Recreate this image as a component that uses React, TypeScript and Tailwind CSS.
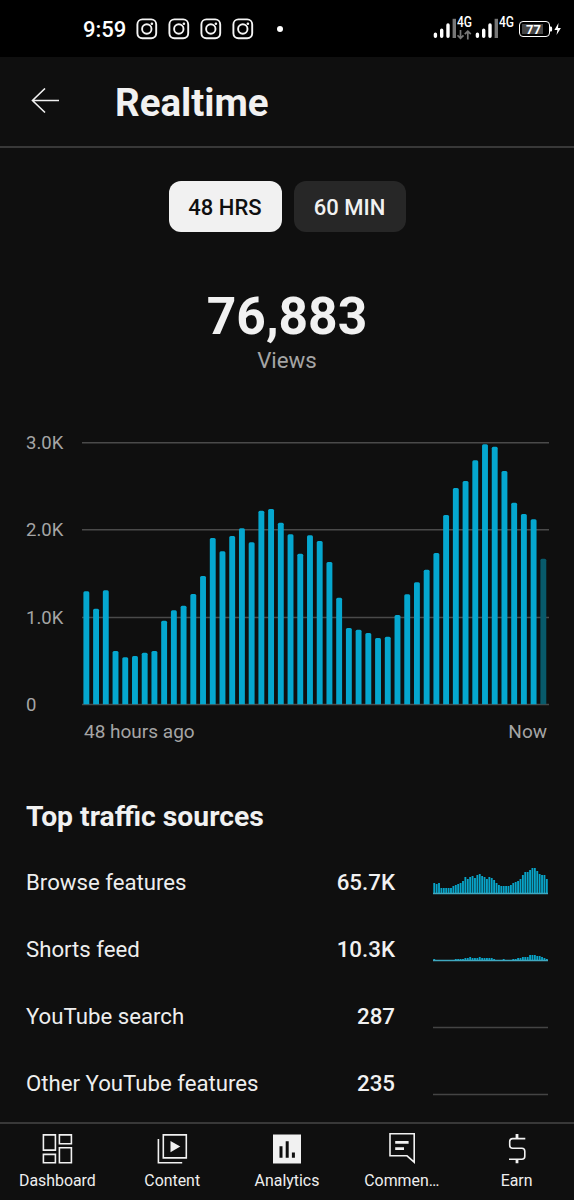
import React from "react";

const VIEWS_TOPS = [
  591.3, 608.7, 590.3, 651, 657.3, 656, 652.7, 651, 620.7, 610.3, 605.7, 594, 576, 538, 551.3, 536,
  528.3, 542.3, 510.7, 509, 522.7, 534.3, 553.7, 535.3, 541, 562, 597.7, 628, 629.7, 633, 638, 636.7,
  615, 594.3, 582.3, 569.7, 553, 515, 488, 481, 460.3, 444.3, 446.7, 471, 502.7, 514, 519.3, 558.7,
];
const BAR_HEIGHTS = VIEWS_TOPS.map((t) => 704.5 - t);

const BROWSE = BAR_HEIGHTS.map((h) => Math.round(h * 0.1) + (h < 80 ? 1 : 0));
const SHORTS = [
  2, 1, 1, 1, 1, 1, 1, 1, 1, 2, 2, 2, 2, 3, 3, 4, 3, 3, 3, 4, 3, 3, 3, 3, 3, 2, 1, 1, 1, 2, 1, 1,
  1, 2, 2, 3, 3, 4, 4, 4, 6, 6, 6, 5, 5, 4, 3, 2,
];

function InstagramIcon() {
  return (
    <svg width="22" height="22" viewBox="0 0 22 22" fill="none" stroke="#f4f4f4">
      <rect x="1.4" y="1.4" width="18.8" height="18.8" rx="5" strokeWidth="1.9" />
      <circle cx="10.8" cy="11" r="4.7" strokeWidth="1.9" />
      <circle cx="15.9" cy="5.7" r="1.3" fill="#f4f4f4" stroke="none" />
    </svg>
  );
}

function SignalIcon() {
  return (
    <svg width="24" height="22" viewBox="0 0 24 22" strokeWidth="3.4" strokeLinecap="round">
      <path d="M2.4 16.2V18.2M8.7 12.2V18.2M15 6.9V18.2" stroke="#fff" />
      <path d="M21.3 0.8V20" stroke="#777" strokeLinecap="butt" />
    </svg>
  );
}

function NetworkLabel() {
  return (
    <span className="block h-[12px] origin-left scale-x-[0.86] text-[14px] leading-[8px] font-medium">4G</span>
  );
}

function StatusBar() {
  return (
    <header className="flex h-[57px] shrink-0 items-center bg-black pl-[83px] text-white">
      <span className="w-[53px] pt-[3px] text-[22px] leading-6 font-medium">9:59</span>
      <div className="flex gap-[10px]">
        <InstagramIcon />
        <InstagramIcon />
        <InstagramIcon />
        <InstagramIcon />
      </div>
      <span className="ml-[23px] size-[6px] rounded-full bg-white" />
      <div className="ml-[150px] flex h-[22px] items-start">
        <SignalIcon />
        <div className="flex w-[18px] shrink-0 flex-col">
          <NetworkLabel />
          <svg width="15" height="10" viewBox="0 0 15 10" fill="none" stroke="#777" strokeWidth="1.7">
            <path d="M3.5 0v8M0.5 5.3l3 3 3-3M10.8 9.5V1.5M7.8 4.2l3-3 3 3" />
          </svg>
        </div>
        <SignalIcon />
        <div className="w-[20px] shrink-0">
          <NetworkLabel />
        </div>
        <div className="mt-[3px] flex h-[16px] w-[31px] shrink-0 rounded-[4px] border-[1.5px] border-white p-[2px]">
          <span className="h-full w-[21px] bg-[#444] pl-[4px] text-[13px] leading-[11px] font-bold">77</span>
        </div>
        <svg width="12" height="16" viewBox="0 0 12 16" className="mt-[3px]" fill="#fff">
          <path d="M0 5.5h1.2q1 0 1 2.5t-1 2.5H0zM8.5 2L4.4 9h3L6.5 14l4.4-7H8z" />
        </svg>
      </div>
    </header>
  );
}

function ViewsChart() {
  return (
    <section className="mt-[59px] flex px-[26px]">
      <div className="flex w-[56px] shrink-0 flex-col pt-[1px] text-[18.5px] leading-[20px] text-[#a5a5a5]">
        <span className="h-[87px]">3.0K</span>
        <span className="h-[88px]">2.0K</span>
        <span className="h-[87px]">1.0K</span>
        <span>0</span>
      </div>
      <div className="shrink-0">
        <svg width="467" height="274" viewBox="81 432 467 274" className="block">
          <path d="M81 442.7H548M81 529.7H548M81 617.5H548M81 704.5H548" stroke="#4a4a4a" strokeWidth="1.4" />
          {BAR_HEIGHTS.map((h, i) => {
            const x = 82.4 + i * 9.723;
            const y = 704.5 - h;
            return (
              <path
                key={i}
                d={`M${x} 704.3V${y + 1.5}q0 -1.5 1.5 -1.5h2.9q1.5 0 1.5 1.5V704.3z`}
                fill={i === 47 ? "#085a6b" : "#05a7cf"}
              />
            );
          })}
        </svg>
        <div className="mt-[16px] flex justify-between pr-[2px] pl-[2px] text-[19px] leading-[20px] text-[#a5a5a5]">
          <span>48 hours ago</span>
          <span>Now</span>
        </div>
      </div>
    </section>
  );
}

function Sparkline({ values }: { values: number[] }) {
  const step = 115 / 48;
  return (
    <svg width="115" height="28" viewBox="0 0 115 28" className="block">
      {values.map((v, i) => (
        <rect key={i} x={i * step + 0.3} y={27 - v} width="1.85" height={v} fill="#08a4c8" />
      ))}
      <path d="M0 26.4H115" stroke={values.length ? "#40a8bf" : "#444"} strokeWidth="1.5" />
    </svg>
  );
}

function SourceRow({ label, value, values }: { label: string; value: string; values: number[] }) {
  return (
    <div className="flex h-[67px] items-center">
      <span className="flex-1 pt-[1px] text-[22.2px] text-[#eee]">{label}</span>
      <span className="mr-[38px] pt-[1px] text-[22.3px] font-medium text-[#f1f1f1]">{value}</span>
      <div className="pb-[3px]">
        <Sparkline values={values} />
      </div>
    </div>
  );
}

function NavItem({ label, children }: { label: string; children: React.ReactNode }) {
  return (
    <div className="flex flex-1 flex-col items-center pt-[8px]">
      <svg width="34" height="34" viewBox="0 0 34 34" fill="none" stroke="#f1f1f1" strokeWidth="1.6">
        {children}
      </svg>
      <span className="mt-[5px] text-[15.9px] leading-[20px] text-[#eee]">{label}</span>
    </div>
  );
}

export default function App() {
  return (
    <div className="flex h-[1200px] w-[574px] flex-col overflow-hidden bg-[#0f0f0f] font-['Roboto',sans-serif] text-[#f1f1f1]">
      <StatusBar />
      <div className="flex h-[91px] shrink-0 items-center border-b-2 border-[#383838] pl-[31px]">
        <svg width="29" height="28" viewBox="0 0 29 28" fill="none" stroke="#f1f1f1" strokeWidth="1.6">
          <path d="M28 12.5H1.5M14 0.5L1.5 12.5 14 24.5" />
        </svg>
        <h1 className="ml-[55px] pt-[2px] text-[38.5px] leading-[44px] font-bold">Realtime</h1>
      </div>
      <div className="mt-[33px] flex shrink-0 justify-center gap-[12px] text-[22px] font-medium">
        <button className="h-[51px] w-[113px] rounded-[12px] bg-[#f1f1f1] pt-[2px] text-[#0f0f0f]">48 HRS</button>
        <button className="h-[51px] w-[112px] rounded-[12px] bg-[#272727] pt-[2px]">60 MIN</button>
      </div>
      <div className="mt-[57px] flex shrink-0 flex-col items-center">
        <span className="text-[51.5px] leading-[56px] font-bold">76,883</span>
        <span className="mt-[2px] text-[22.3px] leading-[26px] text-[#a5a5a5]">Views</span>
      </div>
      <ViewsChart />
      <section className="mt-[58px] h-[322px] shrink-0 overflow-hidden px-[26px]">
        <h2 className="mb-[15px] text-[28.3px] leading-[34px] font-bold">Top traffic sources</h2>
        <SourceRow label="Browse features" value="65.7K" values={BROWSE} />
        <SourceRow label="Shorts feed" value="10.3K" values={SHORTS} />
        <SourceRow label="YouTube search" value="287" values={[]} />
        <SourceRow label="Other YouTube features" value="235" values={[]} />
      </section>
      <nav className="mt-auto flex h-[79px] shrink-0 border-t-2 border-[#383838]">
        <NavItem label="Dashboard">
          <path d="M3.4 2.9h12v15.2h-12zM19.4 2.9h12v8.8h-12zM3.4 22.4h12v8.4h-12zM19.4 15.8h12v15h-12z" />
        </NavItem>
        <NavItem label="Content">
          <path d="M8.3 2.9h23v23h-23zM3.4 7v23.8h23.8" />
          <path d="M15.5 9v11.2l9.8-5.6z" fill="#f1f1f1" stroke="none" />
        </NavItem>
        <NavItem label="Analytics">
          <path d="M3 2.5h28v29h-28z" fill="#f1f1f1" stroke="none" />
          <path d="M11 14.2v11.6M17.2 9.2v16.6M23.4 20.5v5.3" stroke="#0f0f0f" strokeWidth="3" />
        </NavItem>
        <NavItem label="Commen…">
          <path d="M5 1.8h24.2v28.4l-7.2-6.4H5z" />
          <path d="M10.2 10.4h13.4M10.2 16.7h8.8" strokeWidth="2.8" />
        </NavItem>
        <NavItem label="Earn">
          <path d="M25.3 6.6H12.7q-3 0-3 3v3.7q0 3 3 3h9.1q3 0 3 3v4.9q0 3-3 3H9" />
          <path d="M17 2v5M17 27v4.2" strokeWidth="2.8" />
        </NavItem>
      </nav>
    </div>
  );
}
